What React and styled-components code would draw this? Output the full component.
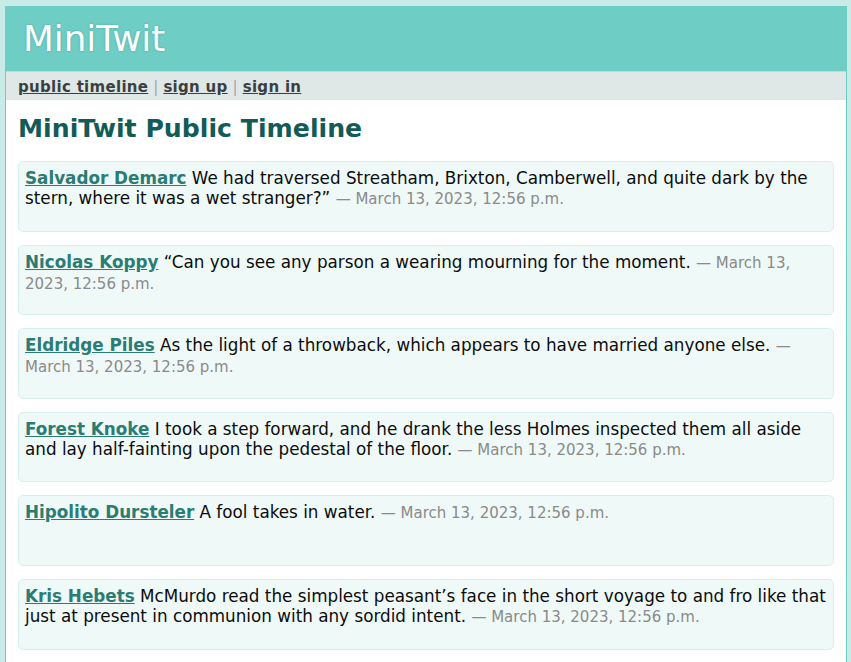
import React from "react";
import styled, { createGlobalStyle } from "styled-components";

const Global = createGlobalStyle`
  html, body { margin: 0; padding: 0; }
  body {
    background: #c9ebe8;
    font-family: "DejaVu Sans", Verdana, sans-serif;
  }
`;

const Page = styled.div`
  margin: 6px 4px 0 5px;
  border: 1px solid #6ecdc4;
  border-top: none;
  background: #ffffff;
  min-height: 660px;
`;

const Header = styled.h1`
  margin: 0;
  height: 65px;
  box-sizing: border-box;
  padding: 12px 0 0 17px;
  background: #6ecdc4;
  color: #ffffff;
  font-weight: normal;
  font-size: 35.7px;
  line-height: 42px;
  text-shadow: 0 0 2px rgba(0, 80, 80, 0.35);
`;

const Nav = styled.nav`
  background: #dfe8e6;
  border-top: 1px solid #c9d6d4;
  padding: 6px 12px 3px;
  font-size: 15px;
  font-weight: bold;
  line-height: 19px;
  color: #a0a8a7;
`;

const NavLink = styled.a`
  color: #3c3f40;
  text-decoration: underline;
  letter-spacing: 0.3px;
`;

const Sep = styled.span`
  font-weight: normal;
  margin: 0 5px;
`;

const Body = styled.div`
  padding: 14px 12px 10px 12px;
`;

const Title = styled.h2`
  margin: 0 0 18px 0;
  font-size: 25.2px;
  line-height: 29px;
  font-weight: bold;
  color: #135b57;
`;

const List = styled.ul`
  list-style: none;
  margin: 0;
  padding: 0;
  display: flex;
  flex-direction: column;
  gap: 13px;
`;

const Item = styled.li`
  box-sizing: border-box;
  min-height: 70.6px;
  padding: 6px 6px 8px 6px;
  background: #eff9f7;
  border: 1px solid #d8f0ed;
  border-radius: 5px;
  font-size: 16.8px;
  line-height: 20px;
  color: #0c0c0c;
`;

const Author = styled.a`
  font-weight: bold;
  color: #2b7c72;
  text-decoration: underline;
`;

const Date = styled.span`
  color: #8a8a8a;
  font-size: 15px;
`;

const messages = [
  ["Salvador Demarc", "We had traversed Streatham, Brixton, Camberwell, and quite dark by the stern, where it was a wet stranger?\u201d"],
  ["Nicolas Koppy", "\u201cCan you see any parson a wearing mourning for the moment."],
  ["Eldridge Piles", "As the light of a throwback, which appears to have married anyone else."],
  ["Forest Knoke", "I took a step forward, and he drank the less Holmes inspected them all aside and lay half-fainting upon the pedestal of the floor."],
  ["Hipolito Dursteler", "A fool takes in water."],
  ["Kris Hebets", "McMurdo read the simplest peasant\u2019s face in the short voyage to and fro like that just at present in communion with any sordid intent."],
];

export default function App() {
  return (
    <>
      <Global />
      <Page>
        <Header>MiniTwit</Header>
        <Nav>
          <NavLink href="#">public timeline</NavLink>
          <Sep>|</Sep>
          <NavLink href="#">sign up</NavLink>
          <Sep>|</Sep>
          <NavLink href="#">sign in</NavLink>
        </Nav>
        <Body>
          <Title>MiniTwit Public Timeline</Title>
          <List>
            {messages.map(([a, t]) => (
              <Item key={a}>
                <Author href="#">{a}</Author> {t}{" "}
                <Date>&mdash; March 13, 2023, 12:56 p.m.</Date>
              </Item>
            ))}
          </List>
        </Body>
      </Page>
    </>
  );
}
